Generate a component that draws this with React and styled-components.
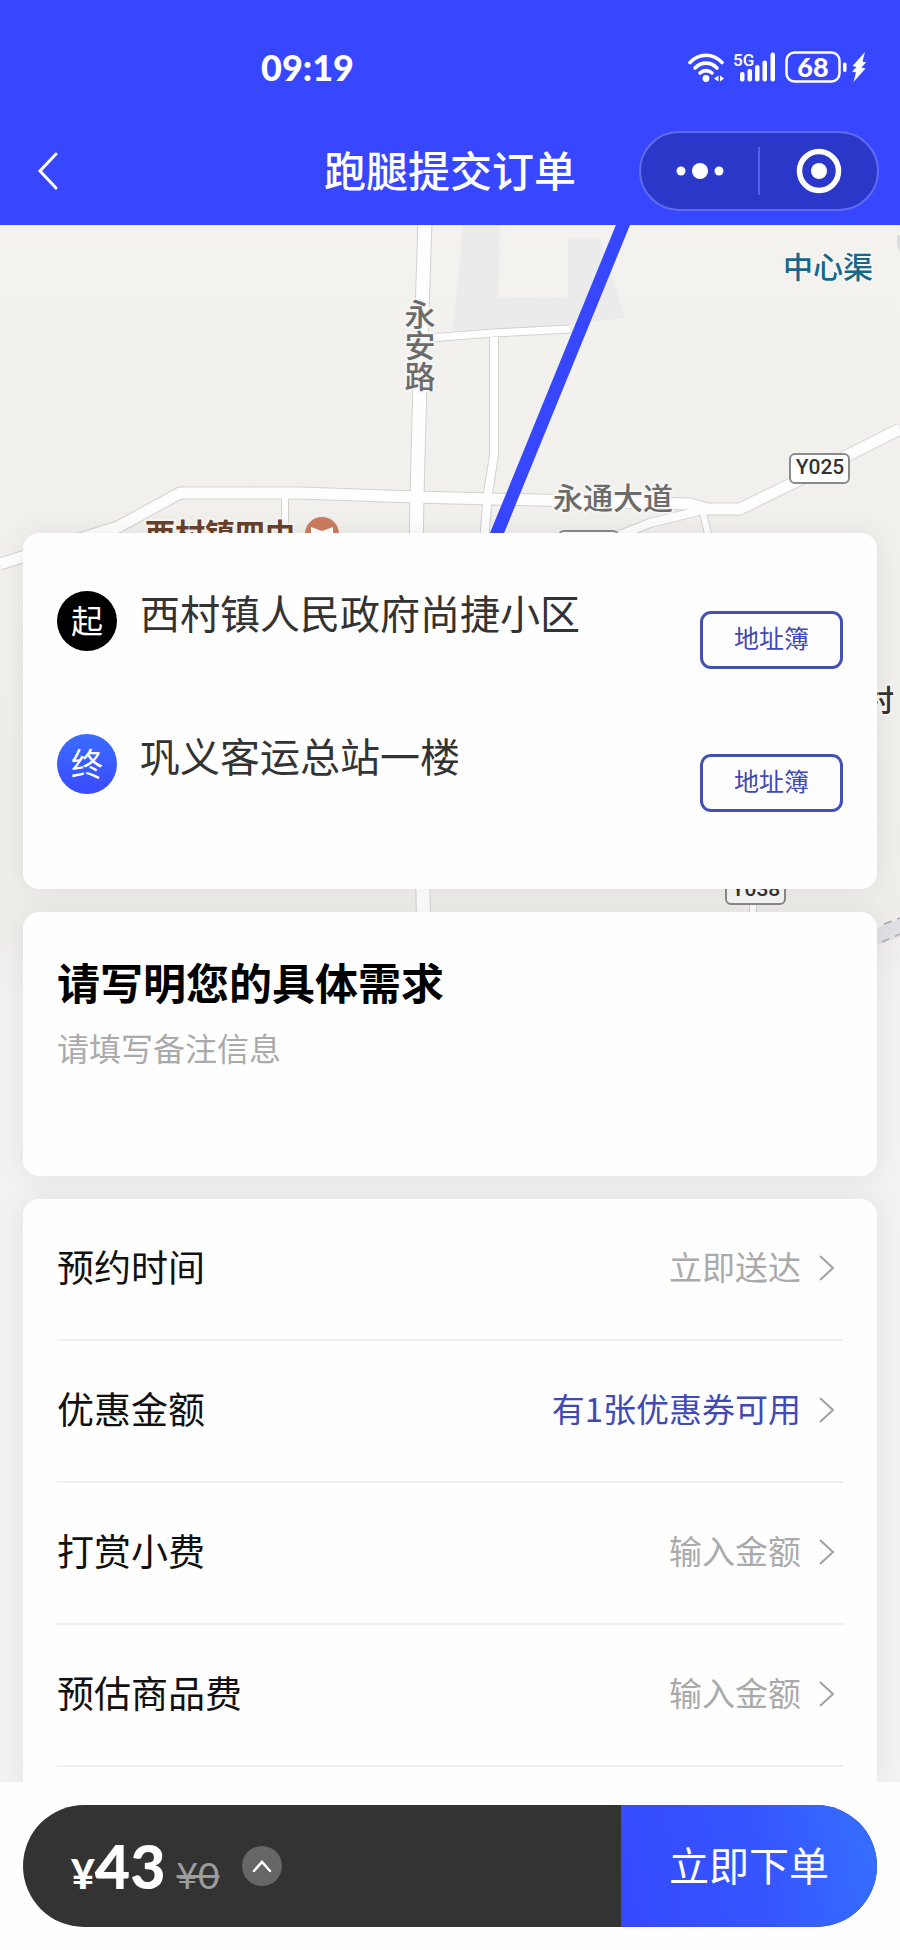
import { useState } from 'react'
import styled, { createGlobalStyle } from 'styled-components'

const stops = [
  { id: 'start', mark: '起', name: '西村镇人民政府尚捷小区' },
  { id: 'end', mark: '终', name: '巩义客运总站一楼' },
]

function StatusBar() {
  return (
    <Status>
      <Time>09:19</Time>
      <StatusIcons>
        <svg width="37" height="32" viewBox="0 0 37 32" fill="none" stroke="#fff" strokeWidth="3.6" strokeLinecap="round" aria-hidden="true">
          <path d="M3 11.5C12 1.800 26 1.800 35 11.500" />
          <path d="M8 17C14.500 10.500 23.500 10.500 30 17" />
          <path d="M13 22C16.500 18.800 21.500 18.800 25 22" />
          <circle cx="19" cy="27.500" r="3.400" fill="#fff" stroke="none" />
          <path d="M31.500 24.500V30.500L27 27.500ZM33 24.500V30.500L37 27.500Z" fill="#fff" stroke="none" />
        </svg>
        <svg width="43" height="32" viewBox="0 0 43 32" fill="#fff" aria-hidden="true">
          <text x="0" y="15" fontFamily="Roboto, sans-serif" fontSize="17" fontWeight="500">5G</text>
          <rect x="7" y="21" width="4.500" height="9.500" rx="2" />
          <rect x="14.500" y="18" width="4.500" height="12.500" rx="2" />
          <rect x="22" y="14" width="4.500" height="16.500" rx="2" />
          <rect x="29.500" y="9.500" width="4.500" height="21" rx="2" />
          <rect x="37.500" y="1.500" width="4.500" height="29" rx="2" />
        </svg>
        <svg width="82" height="32" viewBox="0 0 82 32" fill="#fff" aria-hidden="true">
          <rect x="1.500" y="1.500" width="53" height="29" rx="8" fill="none" stroke="#fff" strokeWidth="2.500" />
          <text x="28" y="25.500" textAnchor="middle" fontFamily="Lato, sans-serif" fontSize="27" fontWeight="900">68</text>
          <rect x="58" y="11.500" width="3.500" height="9.500" rx="1.700" />
          <path d="M80 1L67.500 15L71.500 16L67 20.500L71 21.500L68.500 31L80.500 17.500L76.500 16.500L81 11.500L77.500 10.500Z" />
        </svg>
      </StatusIcons>
    </Status>
  )
}

function NavBar() {
  return (
    <Nav>
      <BackButton type="button" aria-label="返回">
        <svg width="22" height="40" viewBox="0 0 22 40" fill="none" stroke="#fff" strokeWidth="3" strokeLinecap="round">
          <path d="M19 3L3 20L19 37" />
        </svg>
      </BackButton>
      <PageTitle>跑腿提交订单</PageTitle>
      <Capsule>
        <CapsuleButton type="button" aria-label="更多">
          <svg width="48" height="18" viewBox="0 0 48 18" fill="#fff">
            <circle cx="5" cy="9" r="4.500" />
            <circle cx="24" cy="9" r="8" />
            <circle cx="43" cy="9" r="4.500" />
          </svg>
        </CapsuleButton>
        <CapsuleLine />
        <CapsuleButton type="button" aria-label="关闭">
          <svg width="46" height="46" viewBox="0 0 46 46">
            <circle cx="23" cy="23" r="19.500" fill="none" stroke="#fff" strokeWidth="5.500" />
            <circle cx="23" cy="23" r="8" fill="#fff" />
          </svg>
        </CapsuleButton>
      </Capsule>
    </Nav>
  )
}

const roads = [
  { d: 'M0 339L60 320L118 302L180 268L300 268L416 272L690 279L707 284L740 284L795 257L900 204', w: 11 },
  { d: 'M425 -5L421 120L417 270L416 330L424 720', w: 13 },
  { d: 'M429 113L494 108L570 104', w: 7 },
  { d: 'M494 112V230L488 268L483 330', w: 8 },
  { d: 'M285 272V330', w: 6 },
  { d: 'M600 318L650 298L707 284', w: 8 },
  { d: 'M703 288L712 325', w: 6 },
  { d: 'M753 660V700', w: 6 },
]

function RouteMap() {
  return (
    <MapCanvas viewBox="0 0 900 780" preserveAspectRatio="xMidYMin slice" role="img" aria-label="路线地图">
      <defs>
        <linearGradient id="mapShade" x1="0" y1="0" x2="0" y2="1">
          <stop offset="0" stopColor="#f3f2ef" />
          <stop offset="0.35" stopColor="#f1f0ed" />
          <stop offset="1" stopColor="#eeedea" />
        </linearGradient>
        <linearGradient id="mapFade" x1="0" y1="0" x2="0" y2="1">
          <stop offset="0" stopColor="#f2f2f2" stopOpacity="0" />
          <stop offset="1" stopColor="#f2f2f2" />
        </linearGradient>
      </defs>
      <rect width="900" height="780" fill="url(#mapShade)" />
      <path d="M463 0H500L498 73L568 72V13H600L625 93L570 100L453 108Z" fill="#ebebeb" />
      <path d="M897 10H900V28L897 20Z" fill="#ddd" />
      <path d="M870 706L900 694V712L870 722Z" fill="#dfdfe3" />
      <path d="M884 699L900 693M882 717L900 709" fill="none" stroke="#a4a4a8" strokeWidth="1.500" strokeDasharray="8 6" />

      {roads.map((road) => (
        <path key={road.d} d={road.d} fill="none" stroke="#d3d2cf" strokeWidth={road.w + 2} strokeLinejoin="round" />
      ))}
      {roads.map((road) => (
        <path key={road.d} d={road.d} fill="none" stroke="#fefefe" strokeWidth={road.w} strokeLinejoin="round" />
      ))}

      <path d="M625 -5L495 313" stroke="#3746ff" strokeWidth="13" />

      <MapText x="783" y="53" $color="#17678a">中心渠</MapText>
      <VerticalMapText x="420" y="74">永安路</VerticalMapText>
      <MapText x="553" y="284">永通大道</MapText>
      <MapText x="145" y="320" $color="#69402c" $weight="700">西村镇四中</MapText>
      <MapText x="864" y="486" $color="#333">村</MapText>

      <circle cx="322" cy="309" r="17" fill="#cb7c60" />
      <path d="M311 302L322 306L333 302V314H311Z" fill="#fff" />

      <rect x="790" y="229" width="59" height="29" rx="5" fill="#fff" stroke="#8a8a8a" strokeWidth="2" />
      <RoadCode x="820" y="249">Y025</RoadCode>
      <rect x="559" y="306" width="59" height="29" rx="5" fill="#fff" stroke="#8a8a8a" strokeWidth="2" />
      <rect x="726" y="650" width="59" height="29" rx="5" fill="#f7f7f7" stroke="#8a8a8a" strokeWidth="2" />
      <RoadCode x="756" y="671">Y038</RoadCode>

      <rect y="700" width="900" height="80" fill="url(#mapFade)" />
    </MapCanvas>
  )
}

function Arrow() {
  return (
    <svg width="18" height="28" viewBox="0 0 18 28" fill="none" stroke="#a0a0a0" strokeWidth="2" aria-hidden="true">
      <path d="M3 2L16 14L3 26" />
    </svg>
  )
}

function App() {
  const [note, setNote] = useState('')
  const [tip, setTip] = useState('')
  const [goods, setGoods] = useState('')

  return (
    <Page>
      <GlobalStyle />
      <Header>
        <StatusBar />
        <NavBar />
      </Header>

      <Main>
        <RouteMap />
        <Cards>
          <AddressCard>
            {stops.map((stop) => (
              <Stop key={stop.id}>
                <StopMark $end={stop.id === 'end'}>{stop.mark}</StopMark>
                <StopName>{stop.name}</StopName>
                <BookButton type="button">地址簿</BookButton>
              </Stop>
            ))}
          </AddressCard>

          <NoteCard>
            <NoteTitle htmlFor="note">请写明您的具体需求</NoteTitle>
            <NoteInput
              id="note"
              placeholder="请填写备注信息"
              value={note}
              onChange={(e) => setNote(e.target.value)}
            />
          </NoteCard>

          <OptionsCard>
            <OptionButton type="button">
              <OptionLabel>预约时间</OptionLabel>
              <OptionValue>立即送达</OptionValue>
              <Arrow />
            </OptionButton>
            <OptionButton type="button">
              <OptionLabel>优惠金额</OptionLabel>
              <OptionValue $active>有1张优惠券可用</OptionValue>
              <Arrow />
            </OptionButton>
            <OptionField>
              <OptionLabel>打赏小费</OptionLabel>
              <OptionInput inputMode="decimal" placeholder="输入金额" value={tip} onChange={(e) => setTip(e.target.value)} />
              <Arrow />
            </OptionField>
            <OptionField>
              <OptionLabel>预估商品费</OptionLabel>
              <OptionInput inputMode="decimal" placeholder="输入金额" value={goods} onChange={(e) => setGoods(e.target.value)} />
              <Arrow />
            </OptionField>
          </OptionsCard>
        </Cards>
      </Main>

      <Footer>
        <PayBar>
          <Prices>
            <Price>
              <small>¥</small>43
            </Price>
            <OldPrice>¥0</OldPrice>
          </Prices>
          <DetailButton type="button" aria-label="费用明细">
            <svg width="20" height="14" viewBox="0 0 20 14" fill="none" stroke="#fff" strokeWidth="2.500" strokeLinecap="round">
              <path d="M2 12L10 3L18 12" />
            </svg>
          </DetailButton>
          <SubmitButton type="button">立即下单</SubmitButton>
        </PayBar>
      </Footer>
    </Page>
  )
}

export default App

// styled-components
const GlobalStyle = createGlobalStyle`
  * {
    box-sizing: border-box;
  }

  body {
    margin: 0;
    background: #f2f2f2;
    font-family: "Noto Sans CJK SC", sans-serif;
  }

  button, input, textarea {
    margin: 0;
    padding: 0;
    border: none;
    background: none;
    font-family: inherit;
  }

  button {
    cursor: pointer;
  }

  svg {
    display: block;
    flex-shrink: 0;
  }
`

const Page = styled.div`
  display: flex;
  flex-direction: column;
  min-height: 100vh;
`

const Header = styled.header`
  padding-bottom: 14px;
  background: #3746ff;
  color: #fff;
`

const Status = styled.div`
  display: flex;
  align-items: center;
  justify-content: space-between;
  height: 131px;
  padding: 2px 33px 0 29%;
`

const Time = styled.span`
  font-family: Lato, sans-serif;
  font-size: 36px;
  font-weight: 900;
`

const StatusIcons = styled.div`
  display: flex;
  align-items: center;
  gap: 9px;
`

const Nav = styled.nav`
  display: grid;
  grid-template-columns: 1fr auto 1fr;
  align-items: center;
  height: 80px;
  padding: 0 21px;
`

const BackButton = styled.button`
  justify-self: start;
  padding: 8px 16px;
`

const PageTitle = styled.h1`
  margin: 0;
  padding-bottom: 4px;
  font-size: 42px;
  font-weight: 500;
  line-height: 60px;
`

const Capsule = styled.div`
  display: flex;
  align-items: center;
  justify-self: end;
  width: 240px;
  height: 80px;
  border: 2px solid #5f6cf0;
  border-radius: 40px;
  background: #2a37c8;
`

const CapsuleButton = styled.button`
  display: flex;
  flex: 1;
  align-items: center;
  justify-content: center;
  height: 100%;
`

const CapsuleLine = styled.span`
  width: 2px;
  height: 48px;
  background: #5663e6;
`

const Main = styled.main`
  display: grid;
  flex: 1;
  overflow: hidden;
`

const MapCanvas = styled.svg`
  grid-area: 1 / 1;
  align-self: start;
  width: 100%;
  height: 780px;
`

const MapText = styled.text`
  fill: ${({ $color }) => $color || '#6b6b6b'};
  font-size: 30px;
  font-weight: ${({ $weight }) => $weight || 500};
  paint-order: stroke;
  stroke: #f6f6f4;
  stroke-width: 4px;
`

const VerticalMapText = styled(MapText)`
  font-size: 31px;
  writing-mode: vertical-rl;
`

const RoadCode = styled.text`
  fill: #333;
  font-family: Roboto, sans-serif;
  font-size: 21px;
  font-weight: 500;
  text-anchor: middle;
`

const Cards = styled.div`
  grid-area: 1 / 1;
  display: flex;
  flex-direction: column;
  gap: 23px;
  padding: 308px 23px 0;
`

const Card = styled.section`
  padding: 0 34px;
  border-radius: 16px;
  background: #fefefe;
  box-shadow: 0 0 28px rgba(0, 0, 0, 0.07);
`

const AddressCard = styled(Card)`
  padding-top: 58px;
  padding-bottom: 12px;
`

const Stop = styled.div`
  display: flex;
  align-items: flex-start;
  gap: 23px;
  height: 143px;
`

const StopMark = styled.span`
  flex-shrink: 0;
  width: 60px;
  height: 60px;
  border-radius: 50%;
  background: ${({ $end }) => ($end ? 'linear-gradient(#3a6cff, #3a4bff)' : '#000')};
  color: #fff;
  font-size: 32px;
  line-height: 56px;
  text-align: center;
`

const StopName = styled.span`
  flex: 1;
  color: #333;
  font-size: 40px;
  line-height: 42px;
`

const BookButton = styled.button`
  width: 143px;
  height: 58px;
  margin-top: 20px;
  padding-bottom: 6px;
  border: 3px solid #4450b4;
  border-radius: 11px;
  color: #3f4ab4;
  font-size: 25px;
  line-height: 36px;
`

const NoteCard = styled(Card)`
  display: flex;
  flex-direction: column;
  gap: 20px;
  height: 264px;
  padding-top: 43px;
`

const NoteTitle = styled.label`
  color: #000;
  font-size: 43px;
  font-weight: 700;
  line-height: 52px;
`

const NoteInput = styled.textarea`
  width: 100%;
  height: 120px;
  outline: none;
  resize: none;
  color: #333;
  font-size: 32px;
  line-height: 40px;

  &::placeholder {
    color: #aaa;
  }
`

const OptionsCard = styled(Card)`
  flex: 1;
  padding-bottom: 15px;
  border-radius: 16px 16px 0 0;
`

const OptionRow = styled.div`
  display: flex;
  align-items: center;
  gap: 16px;
  width: 100%;
  height: 142px;
  padding-right: 8px;
  padding-bottom: 2px;
  border-bottom: 2px solid #efefef;
`

const OptionButton = styled(OptionRow).attrs({ as: 'button' })``

const OptionField = styled(OptionRow).attrs({ as: 'label' })``

const OptionLabel = styled.span`
  flex: 1;
  padding-bottom: 4px;
  color: #111;
  font-size: 37px;
  line-height: 48px;
  text-align: left;
`

const OptionValue = styled.span`
  padding-bottom: 4px;
  color: ${({ $active }) => ($active ? '#3f4ab4' : '#aaa')};
  font-size: 33px;
  line-height: 48px;
`

const OptionInput = styled.input`
  width: 40%;
  padding-bottom: 4px;
  outline: none;
  color: #333;
  font-size: 33px;
  line-height: 48px;
  text-align: right;

  &::placeholder {
    color: #aaa;
  }
`

const Footer = styled.footer`
  padding: 23px;
  background: #fefefe;
`

const PayBar = styled.div`
  display: flex;
  align-items: center;
  height: 122px;
  overflow: hidden;
  border-radius: 61px;
  background: #333;
`

const Prices = styled.div`
  display: flex;
  align-items: baseline;
  gap: 11px;
  padding-left: 48px;
  padding-bottom: 2px;
  font-family: Lato, sans-serif;
`

const Price = styled.strong`
  color: #fff;
  font-size: 61px;
  font-weight: 900;

  small {
    font-size: 41px;
  }
`

const OldPrice = styled.s`
  color: #9c9c9c;
  font-size: 37px;
`

const DetailButton = styled.button`
  display: flex;
  align-items: center;
  justify-content: center;
  width: 40px;
  height: 40px;
  margin-left: 23px;
  border-radius: 50%;
  background: #666;
`

const SubmitButton = styled.button`
  width: 30%;
  height: 100%;
  margin-left: auto;
  padding-bottom: 5px;
  background: linear-gradient(80deg, #3648ff, #3556ff 55%, #3570ff);
  color: #fff;
  font-size: 40px;
`
